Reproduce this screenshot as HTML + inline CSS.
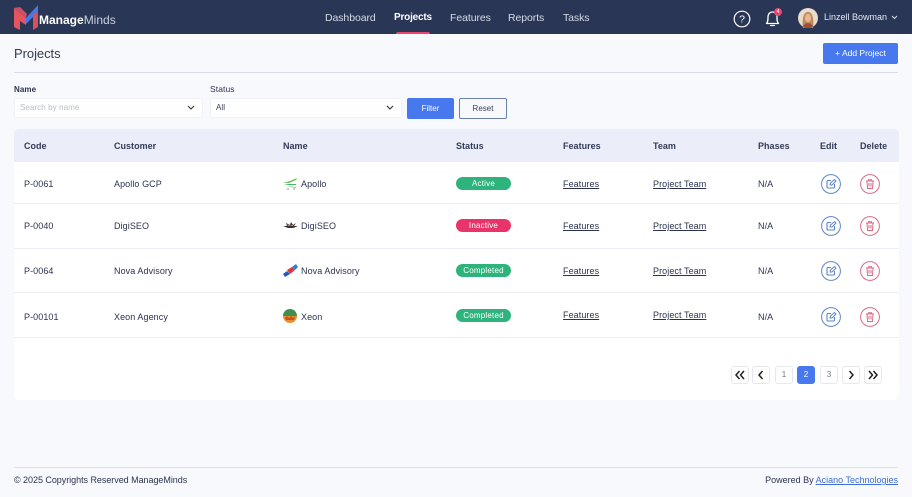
<!DOCTYPE html>
<html><head><meta charset="utf-8"><style>
*{box-sizing:border-box}
html,body{margin:0;padding:0}
body{width:912px;height:497px;overflow:hidden;background:#f7f9fd;position:relative;font-family:"Liberation Sans",sans-serif;color:#2b3350}
.t{position:absolute;white-space:nowrap;font-size:9px;line-height:12px;letter-spacing:.08px}
.b{position:absolute}
.nav{color:#d5dae8;font-size:10.5px;top:12px;letter-spacing:-.08px}
.th{font-size:9px;font-weight:bold;color:#343b58;top:140px;letter-spacing:.02px}
.u{text-decoration:underline}
.pill{position:absolute;left:456px;width:55px;height:13px;border-radius:7px;color:#fff;font-size:8px;line-height:13px;text-align:center;letter-spacing:.2px}
.line{position:absolute;left:14px;width:885px;height:1px;background:#eceef3}
.pg{position:absolute;top:366px;width:18px;height:18px;border:1px solid #e6e8ee;border-radius:3px;background:#fff;font-size:8px;line-height:16px;text-align:center;color:#777}
svg{position:absolute;display:block}
</style></head><body>
<div class="b" style="left:0;top:0;width:912px;height:34px;background:#2a3655"></div>
<svg style="left:13px;top:4px" width="27" height="26" viewBox="0 0 27 26"><path d="M1 4 L13 14 L13 21 L7 17 L7 26 L1 23Z" fill="#e4555f"/><path d="M1 4 L7 3 L14 10 L13 14Z" fill="#c9506a"/><path d="M13 14 L25 1 L25 8 L13 20Z" fill="#4778e8"/><path d="M20 10 L25 8 L25 23 L20 26Z" fill="#d8505c"/></svg>
<div class="t" style="left:39px;top:13px;font-size:12px;line-height:14px;color:#fff;letter-spacing:0"><b>Manage</b><span style="color:#c9cfdf">Minds</span></div>
<div class="t nav" style="left:325px">Dashboard</div>
<div class="t nav" style="left:394px;color:#fff;font-weight:bold;font-size:10px;letter-spacing:-.2px">Projects</div>
<div class="t nav" style="left:450px">Features</div>
<div class="t nav" style="left:508px">Reports</div>
<div class="t nav" style="left:563px">Tasks</div>
<div class="b" style="left:396px;top:32px;width:34px;height:2px;background:#e9476f;border-radius:2px 2px 0 0"></div>
<svg style="left:733px;top:10px" width="18" height="18" viewBox="0 0 18 18"><circle cx="9" cy="9" r="7.8" fill="none" stroke="#fff" stroke-width="1.2"/><text x="9" y="12.6" text-anchor="middle" font-family="Liberation Sans" font-size="10.5" fill="#fff">?</text></svg>
<svg style="left:764px;top:9px" width="18" height="19" viewBox="0 0 18 19"><path d="M2.500 14.500 C4 13 4 11 4 8 C4 5 6 3 8.500 3 C11 3 13 5 13 8 C13 11 13 13 14.500 14.500Z M6.500 16.500 H10.500" fill="none" stroke="#fff" stroke-width="1.300" stroke-linejoin="round" stroke-linecap="round"/></svg>
<div class="b" style="left:774px;top:8px;width:8px;height:8px;border-radius:50%;background:#e9476f;color:#fff;font-size:5.500px;line-height:8px;text-align:center">4</div>
<svg style="left:798px;top:8px" width="20" height="20" viewBox="0 0 20 20"><circle cx="10" cy="10" r="10" fill="#e9dccb"/><path d="M5 20 C4 12 5 4 10 4 C15 4 16 12 15 20Z" fill="#b98a5a"/><ellipse cx="10" cy="10" rx="3.200" ry="4.200" fill="#e9b48f"/><path d="M5 18 Q10 12 15 18 L13 20 H7Z" fill="#9c4f3c"/></svg>
<div class="t" style="left:824px;top:11px;font-size:9px;color:#e4e7f0;letter-spacing:0">Linzell Bowman</div>
<svg style="left:891px;top:15px" width="7" height="5" viewBox="0 0 7 5"><path d="M1 1 L3.500 3.500 L6 1" fill="none" stroke="#d5dae8" stroke-width="1"/></svg>

<div class="t" style="left:14px;top:46px;font-size:13px;line-height:16px;color:#333a52;letter-spacing:-.05px">Projects</div>
<div class="b" style="left:823px;top:43px;width:75px;height:21px;background:#4778ee;border-radius:2px;color:#fff;font-size:8.500px;line-height:21px;text-align:center">+ Add Project</div>
<div class="b" style="left:14px;top:72px;width:884px;height:1px;background:#d8dbe3"></div>

<div class="t" style="left:14px;top:84px;font-size:8px;font-weight:bold;color:#2b3350">Name</div>
<div class="t" style="left:210px;top:83px;font-size:8.500px;color:#2b3350">Status</div>
<div class="b" style="left:14px;top:98px;width:189px;height:20px;background:#fff;border-radius:3px;border:1px solid #f0f2f7"></div>
<div class="t" style="left:20px;top:102px;font-size:8px;color:#b9bdc9">Search by name</div>
<svg style="left:187px;top:105px" width="8" height="6" viewBox="0 0 8 6"><path d="M1 1 L4 4 L7 1" fill="none" stroke="#333" stroke-width="1.100"/></svg>
<div class="b" style="left:210px;top:98px;width:192px;height:20px;background:#fff;border-radius:3px;border:1px solid #f0f2f7"></div>
<div class="t" style="left:216px;top:102px;font-size:8px;color:#3a4056">All</div>
<svg style="left:386px;top:105px" width="8" height="6" viewBox="0 0 8 6"><path d="M1 1 L4 4 L7 1" fill="none" stroke="#333" stroke-width="1.100"/></svg>
<div class="b" style="left:407px;top:98px;width:47px;height:21px;background:#4778ee;border-radius:2px;color:#fff;font-size:8px;line-height:21px;text-align:center">Filter</div>
<div class="b" style="left:459px;top:98px;width:48px;height:21px;border:1px solid #6b82ad;border-radius:2px;color:#3a4056;font-size:8px;line-height:19px;text-align:center">Reset</div>

<div class="b" style="left:14px;top:129px;width:885px;height:271px;background:#fff;border-radius:5px"></div>
<div class="b" style="left:14px;top:129px;width:885px;height:33px;background:#ebeef9;border-radius:5px 5px 0 0"></div>
<div class="t th" style="left:24px">Code</div>
<div class="t th" style="left:114px">Customer</div>
<div class="t th" style="left:283px">Name</div>
<div class="t th" style="left:456px">Status</div>
<div class="t th" style="left:563px">Features</div>
<div class="t th" style="left:653px">Team</div>
<div class="t th" style="left:758px">Phases</div>
<div class="t th" style="left:820px">Edit</div>
<div class="t th" style="left:860px">Delete</div>

<div class="line" style="top:203px"></div>
<div class="line" style="top:248px"></div>
<div class="line" style="top:292px"></div>
<div class="line" style="top:337px"></div>

<div class="t" style="left:24px;top:178px">P-0061</div>
<div class="t" style="left:114px;top:178px">Apollo GCP</div>
<svg style="left:283px;top:178px" width="15" height="12" viewBox="0 0 15 12"><path d="M0 5 L7 3 L14 0 L13 2 L6 5Z" fill="#6cc24a"/><path d="M1 6 L13 6 L13 7 L5 7Z" fill="#43b57a"/><path d="M5 8 L13 9 L13 10 L7 9Z" fill="#8fce6b"/><circle cx="5" cy="11" r=".6" fill="#444"/><circle cx="11" cy="11" r=".6" fill="#444"/></svg>
<div class="t" style="left:301px;top:178px">Apollo</div>
<div class="pill" style="top:177px;background:#2fb37d">Active</div>
<div class="t u" style="left:563px;top:178px">Features</div>
<div class="t u" style="left:653px;top:178px">Project Team</div>
<div class="t" style="left:758px;top:178px">N/A</div>

<div class="t" style="left:24px;top:220px">P-0040</div>
<div class="t" style="left:114px;top:220px">DigiSEO</div>
<svg style="left:283px;top:221px" width="15" height="10" viewBox="0 0 15 10"><path d="M0 5 L4 5 L3 2 L7 4 L8 1 L10 4 L13 2 L11 5 L15 5 L10 7 H5Z" fill="#3b2f2a"/><path d="M4 3 Q7.500 6 11 3 L10 5 H5Z" fill="#b59a7a"/></svg>
<div class="t" style="left:301px;top:220px">DigiSEO</div>
<div class="pill" style="top:219px;background:#e9336b">Inactive</div>
<div class="t u" style="left:563px;top:220px">Features</div>
<div class="t u" style="left:653px;top:220px">Project Team</div>
<div class="t" style="left:758px;top:220px">N/A</div>

<div class="t" style="left:24px;top:265px">P-0064</div>
<div class="t" style="left:114px;top:265px">Nova Advisory</div>
<svg style="left:283px;top:264px" width="15" height="14" viewBox="0 0 15 14"><path d="M0 10 L4 7 L7 10 L2 13Z" fill="#2756c5"/><path d="M4 6 L9 3 L12 6 L7 10Z" fill="#d93a3a"/><path d="M9 3 L13 0 L15 3 L12 6Z" fill="#2f7de0"/></svg>
<div class="t" style="left:301px;top:265px">Nova Advisory</div>
<div class="pill" style="top:264px;background:#2fb37d">Completed</div>
<div class="t u" style="left:563px;top:265px">Features</div>
<div class="t u" style="left:653px;top:265px">Project Team</div>
<div class="t" style="left:758px;top:265px">N/A</div>

<div class="t" style="left:24px;top:311px">P-00101</div>
<div class="t" style="left:114px;top:311px">Xeon Agency</div>
<svg style="left:283px;top:309px" width="14" height="14" viewBox="0 0 14 14"><path d="M0 7 A7 7 0 0 1 14 7Z" fill="#3f8f4f"/><path d="M0 7 H14 A7 7 0 0 1 0 7Z" fill="#e8912c"/><path d="M2 9 L4 7 L6 9 L8 7 L10 9 L12 7 L11 11 H3Z" fill="#c7531f"/></svg>
<div class="t" style="left:301px;top:311px">Xeon</div>
<div class="pill" style="top:309px;background:#2fb37d">Completed</div>
<div class="t u" style="left:563px;top:309px">Features</div>
<div class="t u" style="left:653px;top:309px">Project Team</div>
<div class="t" style="left:758px;top:311px">N/A</div>

<svg width="0" height="0" style="left:0;top:0"><defs>
<g id="ed"><circle cx="10" cy="10" r="9.400" fill="#fff" stroke="#5d84c4" stroke-width="1"/><path d="M10 6.500 H7 Q6 6.500 6 7.500 V13 Q6 14 7 14 H12.500 Q13.500 14 13.500 13 V10" fill="none" stroke="#5d84c4" stroke-width="1.100"/><path d="M9 11 L9.500 9 L13.500 5.500 L15 7 L11 11Z" fill="none" stroke="#5d84c4" stroke-width="1"/></g>
<g id="de"><circle cx="10" cy="10" r="9.400" fill="#fff" stroke="#d96a85" stroke-width="1"/><path d="M6 7 H14 M8.500 7 V5.800 H11.500 V7 M7 7 L7.500 14.500 H12.500 L13 7 M9 9 V12.500 M11 9 V12.500" fill="none" stroke="#d96a85" stroke-width="1"/></g>
</defs></svg>
<svg style="left:821px;top:174px" width="20" height="20"><use href="#ed"/></svg>
<svg style="left:860px;top:174px" width="20" height="20"><use href="#de"/></svg>
<svg style="left:821px;top:216px" width="20" height="20"><use href="#ed"/></svg>
<svg style="left:860px;top:216px" width="20" height="20"><use href="#de"/></svg>
<svg style="left:821px;top:261px" width="20" height="20"><use href="#ed"/></svg>
<svg style="left:860px;top:261px" width="20" height="20"><use href="#de"/></svg>
<svg style="left:821px;top:307px" width="20" height="20"><use href="#ed"/></svg>
<svg style="left:860px;top:307px" width="20" height="20"><use href="#de"/></svg>

<div class="pg" style="left:731px"></div>
<svg style="left:731px;top:366px" width="18" height="18" viewBox="0 0 18 18"><path d="M8.500 5 L5 9 L8.500 13 M13 5 L9.500 9 L13 13" fill="none" stroke="#222" stroke-width="1.500"/></svg>
<div class="pg" style="left:752px"></div>
<svg style="left:752px;top:366px" width="18" height="18" viewBox="0 0 18 18"><path d="M10.500 5 L7 9 L10.500 13" fill="none" stroke="#222" stroke-width="1.500"/></svg>
<div class="pg" style="left:775px">1</div>
<div class="pg" style="left:797px;background:#4778ee;border-color:#4778ee;color:#fff">2</div>
<div class="pg" style="left:820px">3</div>
<div class="pg" style="left:842px"></div>
<svg style="left:842px;top:366px" width="18" height="18" viewBox="0 0 18 18"><path d="M7.500 5 L11 9 L7.500 13" fill="none" stroke="#222" stroke-width="1.500"/></svg>
<div class="pg" style="left:864px"></div>
<svg style="left:864px;top:366px" width="18" height="18" viewBox="0 0 18 18"><path d="M5 5 L8.500 9 L5 13 M9.500 5 L13 9 L9.500 13" fill="none" stroke="#222" stroke-width="1.500"/></svg>

<div class="b" style="left:14px;top:467px;width:884px;height:1px;background:#dfe2e9"></div>
<div class="t" style="left:14px;top:474px;font-size:9px;color:#2b3350;letter-spacing:-.04px">© 2025 Copyrights Reserved ManageMinds</div>
<div class="t" style="right:14px;top:474px;font-size:9px;color:#2b3350;letter-spacing:0">Powered By <span class="u" style="color:#3f6fd8">Aciano Technologies</span></div>
</body></html>
